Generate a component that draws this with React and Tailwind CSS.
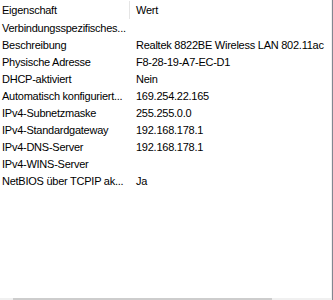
export default function App() {
  const rows = [
    ["Verbindungsspezifisches...", ""],
    ["Beschreibung", "Realtek 8822BE Wireless LAN 802.11ac"],
    ["Physische Adresse", "F8-28-19-A7-EC-D1"],
    ["DHCP-aktiviert", "Nein"],
    ["Automatisch konfiguriert...", "169.254.22.165"],
    ["IPv4-Subnetzmaske", "255.255.0.0"],
    ["IPv4-Standardgateway", "192.168.178.1"],
    ["IPv4-DNS-Server", "192.168.178.1"],
    ["IPv4-WINS-Server", ""],
    ["NetBIOS über TCPIP ak...", "Ja"],
  ];
  return (
    <div className="w-[333px] h-[300px] bg-white flex text-[11px] tracking-[-0.25px] text-black overflow-hidden" style={{ fontFamily: '"Liberation Sans", Arial, sans-serif' }}>
      <div className="flex-1 flex flex-col min-w-0">
        <div className="flex-1 flex flex-col">
          <div className="flex h-[20px] items-start">
            <div className="w-[130px] pl-[2px] h-[18px] mt-[1px] flex items-center border-r border-[#e5e5e5]">Eigenschaft</div>
            <div className="pl-[6px] h-[18px] mt-[1px] flex items-center">Wert</div>
          </div>
          {rows.map(([k, v]) => (
            <div key={k} className="flex h-[17px] items-center">
              <div className="w-[130px] shrink-0 pl-[2px] whitespace-nowrap overflow-hidden">{k}</div>
              <div className="pl-[6px] whitespace-nowrap">{v}</div>
            </div>
          ))}
        </div>
        <div className="h-[2px] bg-[#f0f0f0] flex">
          <div className="w-[13px]" />
          <div className="w-[259px] bg-[#cdcdcd]" />
        </div>
      </div>
      <div className="w-[1px] bg-[#f0f0f0]" />
      <div className="w-[1px] bg-[#828790]" />
    </div>
  );
}
